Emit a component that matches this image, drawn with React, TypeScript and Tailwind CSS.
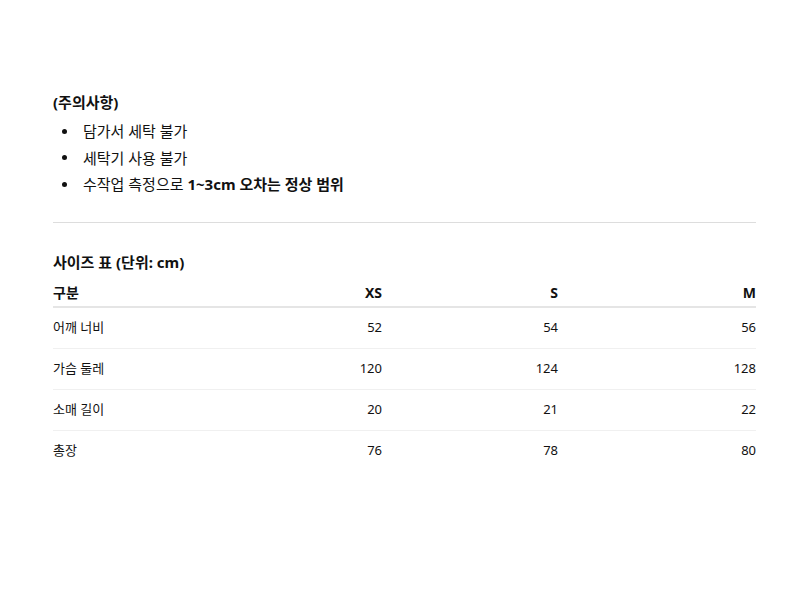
const notes = [
  { text: "담가서 세탁 불가" },
  { text: "세탁기 사용 불가" },
  { text: "수작업 측정으로 ", bold: "1~3cm 오차는 정상 범위" },
];

const sizes = ["XS", "S", "M"];

const rows = [
  { label: "어깨 너비", values: [52, 54, 56] },
  { label: "가슴 둘레", values: [120, 124, 128] },
  { label: "소매 길이", values: [20, 21, 22] },
  { label: "총장", values: [76, 78, 80] },
];

export default function App() {
  return (
    <div className="min-h-[600px] w-[800px] bg-white font-['Noto_Sans','Noto_Sans_CJK_KR',sans-serif] text-[#111]">
      <div className="ml-[53px] w-[703px] pt-[91px]">
        {/* 주의사항 */}
        <h3 className="text-[15px] font-bold leading-[22px]">(주의사항)</h3>
        <ul className="mt-[5px] flex flex-col">
          {notes.map((note, idx) => (
            <li key={idx} className="flex items-center h-[26.5px] text-[15px]">
              <span className="w-[30px] pl-[9px] flex items-center">
                <span className="block w-[5px] h-[5px] rounded-full bg-[#111]" />
              </span>
              <span>
                {note.text}
                {note.bold && <b className="font-bold">{note.bold}</b>}
              </span>
            </li>
          ))}
        </ul>
        <div className="mt-[24px] border-t border-[#dddddd]" />

        {/* 사이즈 표 */}
        <h3 className="mt-[28px] text-[15px] font-bold leading-[22px]">
          사이즈 표 (단위: cm)
        </h3>
        <div className="mt-[9px] grid grid-cols-[160px_169px_176px_198px] text-[14px] font-bold h-[26px] items-start border-b-2 border-[#e5e5e5]">
          <div>구분</div>
          {sizes.map((s) => (
            <div key={s} className="text-right">
              {s}
            </div>
          ))}
        </div>
        {rows.map((row, idx) => (
          <div
            key={row.label}
            className={
              "grid grid-cols-[160px_169px_176px_198px] h-[41px] items-center text-[13px] " +
              (idx < rows.length - 1 ? "border-b border-[#f0f0f0]" : "")
            }
          >
            <div>{row.label}</div>
            {row.values.map((v, i) => (
              <div key={i} className="text-right">
                {v}
              </div>
            ))}
          </div>
        ))}
      </div>
    </div>
  );
}
